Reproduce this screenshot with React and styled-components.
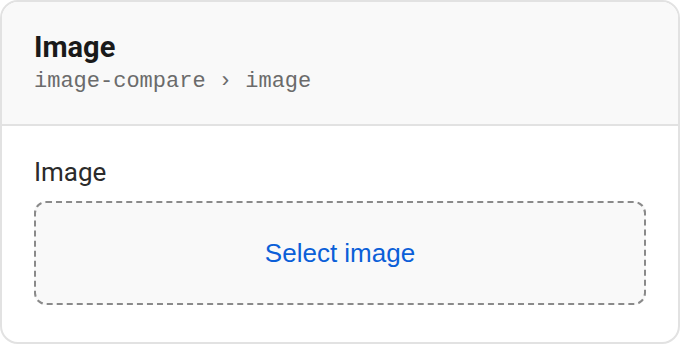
import React from "react";
import styled, { createGlobalStyle } from "styled-components";

const Global = createGlobalStyle`
  html, body { margin: 0; padding: 0; background: #ffffff; }
  body { font-family: Roboto, "Liberation Sans", Arial, sans-serif; }
  * { box-sizing: border-box; }
`;

const Card = styled.div`
  width: 680px;
  height: 344px;
  border: 2px solid #e2e2e2;
  border-radius: 18px;
  overflow: hidden;
  background: #ffffff;
  display: flex;
  flex-direction: column;
`;

const Header = styled.div`
  background: #f9f9f9;
  border-bottom: 2px solid #e2e2e2;
  padding: 28px 32px 0;
  height: 124px;
  flex-shrink: 0;
  display: flex;
  flex-direction: column;
`;

const Title = styled.div`
  font-size: 29px;
  line-height: 34px;
  font-weight: 700;
  color: #1a1a1a;
`;

const Path = styled.div`
  font-family: "Liberation Mono", "Courier New", monospace;
  font-size: 22px;
  line-height: 26px;
  margin-top: 5px;
  color: #6b6b6b;
`;

const Body = styled.div`
  flex: 1;
  padding: 31px 32px 37px;
  display: flex;
  flex-direction: column;
`;

const Label = styled.div`
  font-size: 26px;
  line-height: 30px;
  color: #2b2b2b;
  margin-bottom: 14px;
`;

const DropZone = styled.button`
  height: 104px;
  width: 100%;
  flex-shrink: 0;
  border: 2px dashed #8a8a8a;
  border-radius: 12px;
  background: #f9f9f9;
  display: flex;
  align-items: center;
  justify-content: center;
  font-family: "Liberation Sans", Arial, sans-serif;
  font-size: 26px;
  color: #0b5fd8;
  cursor: pointer;
  padding: 0;
`;

export default function App() {
  return (
    <>
      <Global />
      <Card>
        <Header>
          <Title>Image</Title>
          <Path>image-compare › image</Path>
        </Header>
        <Body>
          <Label>Image</Label>
          <DropZone>Select image</DropZone>
        </Body>
      </Card>
    </>
  );
}
